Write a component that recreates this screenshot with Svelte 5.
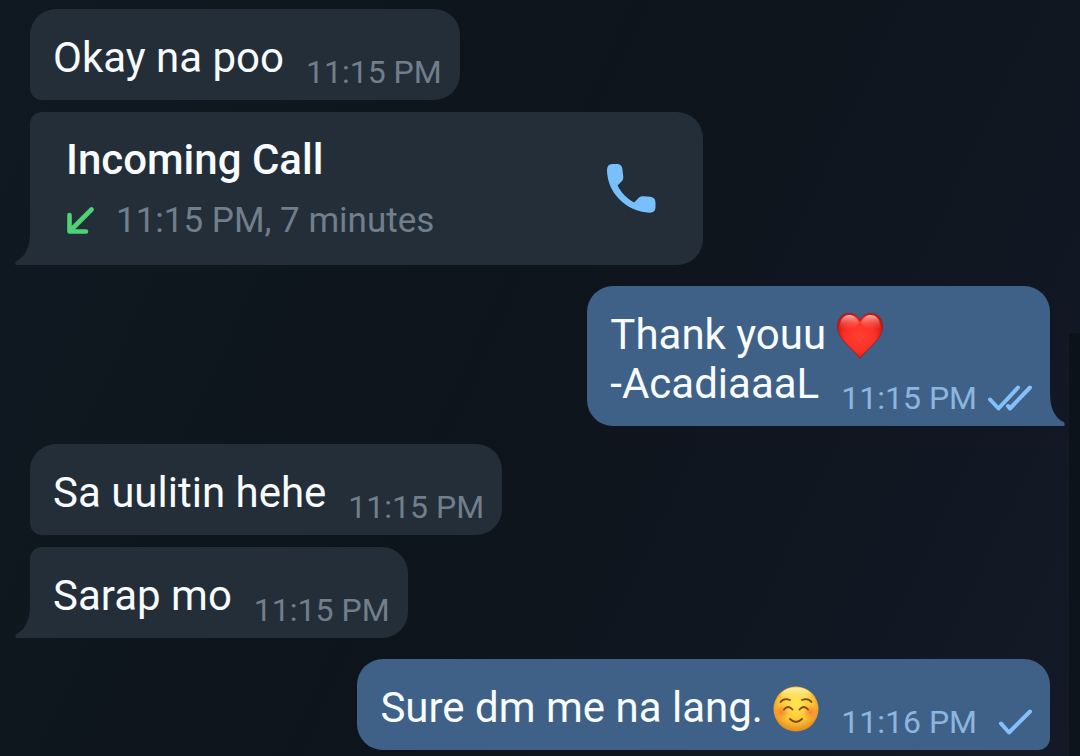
<script lang="ts">
type Message = {
    kind: 'text' | 'call';
    out?: boolean;
    first?: boolean;
    last?: boolean;
    lines?: string[];
    emoji?: 'heart' | 'smile';
    title?: string;
    duration?: string;
    time: string;
    status?: 'sent' | 'read';
}

const messages: Message[] = [
    { kind: 'text', lines: ['Okay na poo'], time: '11:15 PM' },
    { kind: 'call', title: 'Incoming Call', time: '11:15 PM', duration: '7 minutes', last: true },
    { kind: 'text', out: true, first: true, last: true, lines: ['Thank youu', '-AcadiaaaL'], emoji: 'heart', time: '11:15 PM', status: 'read' },
    { kind: 'text', first: true, lines: ['Sa uulitin hehe'], time: '11:15 PM' },
    { kind: 'text', last: true, lines: ['Sarap mo'], time: '11:15 PM' },
    { kind: 'text', out: true, first: true, lines: ['Sure dm me na lang.'], emoji: 'smile', time: '11:16 PM', status: 'sent' },
]
</script>

{#snippet heart()}
    <svg class="emoji" viewBox="0 0 46 46" role="img" aria-label="red heart">
        <defs>
            <radialGradient id="heart-fill" cx="50%" cy="50%" r="58%">
                <stop offset="0" stop-color="#ff4031" />
                <stop offset=".6" stop-color="#fb3026" />
                <stop offset="1" stop-color="#c5130f" />
            </radialGradient>
            <linearGradient id="heart-shine" x1="0" y1="0" x2="0" y2="1">
                <stop offset="0" stop-color="#ffc4bb" stop-opacity=".9" />
                <stop offset="1" stop-color="#ff4a3c" stop-opacity="0" />
            </linearGradient>
        </defs>
        <path d="M23 45.500C20 41 15.500 37 10 31.500C4 25.500 .5 20 .5 13C.5 5.500 5.500 .5 12 .5C17 .5 21 3 23 7.500C25 3 29 .5 34 .5C40.500 .5 45.500 5.500 45.500 13C45.500 20 42 25.500 36 31.500C30.500 37 26 41 23 45.500Z" fill="url(#heart-fill)" stroke="#a51c24" stroke-width="1" />
        <path d="M3 13C3 6 7 2 12 2C16.500 2 20 4.500 22 10C19 15 14 17 10 17C7 17 4 16 3 13Z" fill="url(#heart-shine)" />
        <path d="M43 13C43 6 39 2 34 2C29.500 2 26 4.500 24 10C27 15 32 17 36 17C39 17 42 16 43 13Z" fill="url(#heart-shine)" />
    </svg>
{/snippet}

{#snippet smile()}
    <svg class="emoji" viewBox="0 0 46 46" role="img" aria-label="smiling face">
        <defs>
            <radialGradient id="face-fill" cx="50%" cy="40%" r="62%">
                <stop offset="0" stop-color="#ffe74f" />
                <stop offset=".6" stop-color="#fdc534" />
                <stop offset="1" stop-color="#dd851d" />
            </radialGradient>
            <linearGradient id="face-shine" x1="0" y1="0" x2="0" y2="1">
                <stop offset="0" stop-color="#fff9c0" stop-opacity=".8" />
                <stop offset="1" stop-color="#fff27a" stop-opacity="0" />
            </linearGradient>
            <radialGradient id="blush">
                <stop offset="0" stop-color="#f9702a" stop-opacity=".8" />
                <stop offset="1" stop-color="#f9802a" stop-opacity="0" />
            </radialGradient>
        </defs>
        <circle cx="23" cy="23" r="22.500" fill="url(#face-fill)" />
        <ellipse cx="23" cy="9" rx="15" ry="7.500" fill="url(#face-shine)" />
        <circle cx="8.500" cy="26" r="8" fill="url(#blush)" />
        <circle cx="37.500" cy="26" r="8" fill="url(#blush)" />
        <g fill="none" stroke="#7d4514" stroke-width="1.800" stroke-linecap="round">
            <path d="M7.500 16Q11 11.500 17 14M29 14Q35 11.500 38.500 16" />
            <path d="M11 23.500Q15 18.500 19.500 23.500M26.500 23.500Q31 18.500 35 23.500" />
            <path d="M17 33Q23 39 29 33" />
        </g>
    </svg>
{/snippet}

{#snippet tail()}
    <svg class="tail" viewBox="0 0 16 32" aria-hidden="true">
        <path d="M16 0H15C15 14 10 24 1.500 28C0 29 0 32 1 32H16Z" fill="currentColor" />
    </svg>
{/snippet}

{#snippet meta(message: Message)}
    <span class="meta">
        <time>{message.time}</time>
        {#if message.status}
            <svg class="ticks" viewBox="0 0 44 26" role="img" aria-label={message.status}>
                {#if message.status === 'read'}
                    <path d="M2 14.500L10.500 23.500L30 2.500M20 21L22 23.500L42 2.500" />
                {:else}
                    <path d="M13 14.500L21 23.500L42 2.500" />
                {/if}
            </svg>
        {/if}
    </span>
{/snippet}

<main class="chat">
    {#each messages as message}
        <article class="bubble {message.kind}" class:out={message.out} class:first={message.first} class:last={message.last}>
            {#if message.kind === 'call'}
                <div class="call-info">
                    <h2>{message.title}</h2>
                    <p class="call-meta">
                        <svg class="arrow" viewBox="0 0 28 28" aria-hidden="true">
                            <path d="M25.500 2.500L4 24M3.500 8V24.500H20" fill="none" stroke="#4fd276" stroke-width="4.600" stroke-linecap="round" stroke-linejoin="round" />
                        </svg>
                        <span>{message.time}, {message.duration}</span>
                    </p>
                </div>
                <button class="call-btn" aria-label="Call back">
                    <svg viewBox="0 0 49 49" aria-hidden="true">
                        <path d="M6 0H9.500C13.500 0 15 2 15.400 5L16.200 12C16.500 14.500 16 16 14.800 17.300L10.500 21.500C14 28.500 20 34.500 27.200 38.500L31.500 34C33 32.500 34.500 32 37 32.200L43 32.800C47 33.200 48.500 35.500 48.500 39V42.500C48.500 47 46.500 48.700 42.500 48.700C19 47.500 0.500 29 0 6.500C0 2 2 0 6 0Z" fill="currentColor" />
                    </svg>
                </button>
            {:else}
                {#each message.lines ?? [] as line, i}
                    <div class="line">
                        <p>
                            {line}
                            {#if i === 0 && message.emoji === 'heart'}{@render heart()}{/if}
                            {#if i === 0 && message.emoji === 'smile'}{@render smile()}{/if}
                        </p>
                        {#if i === (message.lines?.length ?? 0) - 1}{@render meta(message)}{/if}
                    </div>
                {/each}
            {/if}
            {#if message.last}{@render tail()}{/if}
        </article>
    {/each}
</main>

<style>
:global(body) {
    background:
        linear-gradient(180deg, #0b1219 0%, #0e141c 60%, #0f131c 100%) right 333px / 11px 100% no-repeat,
        linear-gradient(115deg, #101922 0%, #0d141b 45%, #10161f 65%, #131926 100%);
    min-height: 100vh;
}
.chat {
    display: flex;
    flex-direction: column;
    align-items: flex-start;
    gap: 12px;
    padding: 9px 30px 6px;
    font-family: Roboto, "Liberation Sans", sans-serif;
    color: #f8fbff;
}
h2, p {
    margin: 0;
}
.bubble {
    position: relative;
    box-sizing: border-box;
    padding: 24px 18px 18px 23px;
    background: #232e39;
    border-radius: 12px 26px 26px 12px;
}
.bubble.first, .bubble:first-child {
    border-top-left-radius: 26px;
}
.bubble.last {
    border-bottom-left-radius: 0;
}
.bubble.first {
    margin-top: 6px;
}
.bubble.out {
    align-self: flex-end;
    margin-top: 9px;
    background: #3f6188;
    border-radius: 26px 26px 12px 26px;
}
.bubble.out.last {
    border-bottom-right-radius: 0;
}
.line {
    display: flex;
    align-items: flex-end;
    gap: 22px;
    font-size: 42px;
    line-height: 49px;
}
.emoji {
    width: 46px;
    height: 46px;
    vertical-align: -10px;
}
.meta {
    display: flex;
    align-items: center;
    gap: 11px;
    margin-bottom: -6px;
    font-size: 32px;
    line-height: 32px;
    white-space: nowrap;
    color: #717e8c;
}
.out .meta {
    color: #8cb6e0;
}
.ticks {
    width: 44px;
    height: 26px;
    fill: none;
    stroke: #84c1fc;
    stroke-width: 4;
    stroke-linecap: round;
    stroke-linejoin: round;
}
.call {
    display: flex;
    align-items: center;
    justify-content: space-between;
    width: 66%;
    padding: 23px 47px 23px 36px;
}
h2 {
    font-size: 42px;
    line-height: 49px;
    font-weight: 500;
}
.call-meta {
    display: flex;
    align-items: center;
    gap: 22px;
    margin-top: 16px;
    font-size: 35px;
    line-height: 42px;
    color: #717e8c;
}
.arrow {
    width: 28px;
    height: 28px;
}
.call-btn {
    display: flex;
    padding: 0;
    border: none;
    background: transparent;
    color: #77c0fc;
    cursor: pointer;
}
.call-btn svg {
    width: 49px;
    height: 49px;
}
.tail {
    position: absolute;
    bottom: 0;
    right: calc(100% - 1px);
    width: 16px;
    height: 32px;
    color: #232e39;
}
.out .tail {
    right: auto;
    left: calc(100% - 1px);
    transform: scaleX(-1);
    color: #3f6188;
}
</style>
